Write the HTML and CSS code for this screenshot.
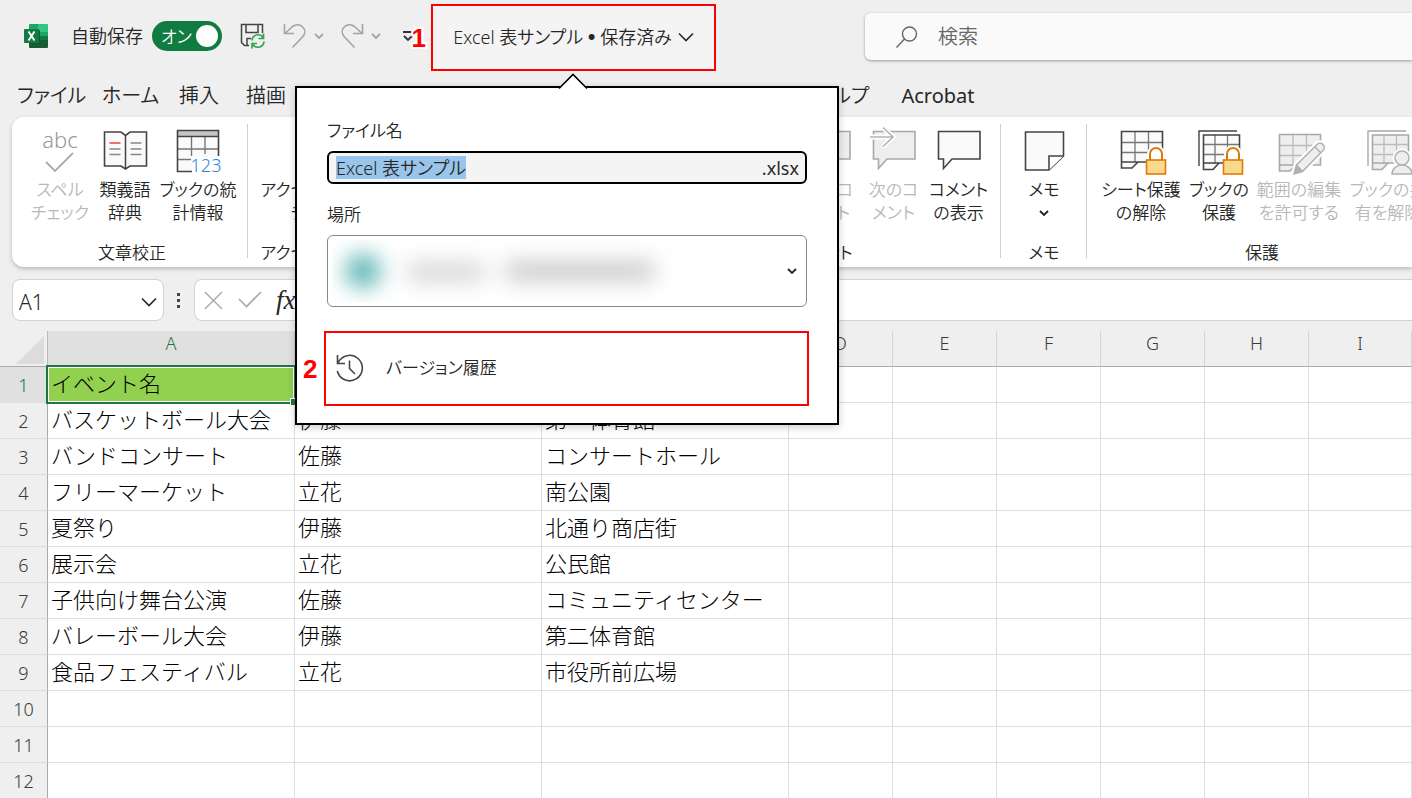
FILE: index.html
```html
<!DOCTYPE html>
<html lang="ja">
<head>
<meta charset="utf-8">
<title>Excel 表サンプル</title>
<link rel="stylesheet" href="styles.css">
</head>
<body>
<svg class="defs" aria-hidden="true">
  <symbol id="chev" viewBox="0 0 16 16"><path d="M1 4.500 L8 11.500 L15 4.500" fill="none" stroke="currentColor" stroke-width="1.600"/></symbol>
  <symbol id="chev-small" viewBox="0 0 10 10"><path d="M1 3 L5 7 L9 3" fill="none" stroke="currentColor" stroke-width="1.800"/></symbol>
  <symbol id="lock" viewBox="0 0 22 30"><path d="M5 15 V8 a6 6 0 0 1 12 0 V15" fill="#fff" stroke="#fff" stroke-width="6"/><path d="M5 15 V8 a6 6 0 0 1 12 0 V15" fill="#fff" stroke="#e07808" stroke-width="2"/><rect x="1.500" y="14" width="19" height="14" fill="#f9d98b" stroke="#e07808" stroke-width="1.600"/></symbol>
  <symbol id="comment" viewBox="0 0 48 48"><path d="M3.500 5.500 H45 V33 H17 L8.500 42.500 V33 H3.500Z" fill="var(--fill)" stroke="currentColor" stroke-width="1.600"/></symbol>
  <symbol id="grid" viewBox="0 0 48 48"><path d="M4.500 5.500 H45.500 V36 H21 L15 42 H4.500Z" fill="var(--fill)"/><path d="M18 6 V36 M31.500 6 V36 M5 16.500 H45 M5 26.500 H45" stroke="var(--inner)" stroke-width="1.300" fill="none"/><path d="M4.500 5.500 H45.500 V36 H21 L15 42 H4.500Z M5 36 H21" fill="none" stroke="currentColor" stroke-width="1.600"/></symbol>
  <symbol id="books" viewBox="0 0 48 48"><path d="M4 40 V5 H42" fill="none" stroke="currentColor" stroke-width="1.400"/><path d="M8.500 9 H44.500 V37 H24 L18 43.500 H8.500Z" fill="var(--fill)"/><path d="M20 9 V38 M32.500 9 V37 M9 18.500 H44 M9 28.500 H44" stroke="var(--inner)" stroke-width="1.300" fill="none"/><path d="M8.500 9 H44.500 V37 H24 L18 43.500 H8.500Z M9 37 H24" fill="none" stroke="currentColor" stroke-width="1.600"/></symbol>
</svg>

<div class="app">
  <header class="titlebar">
    <div class="quick">
      <svg class="logo" viewBox="0 0 24 24" aria-label="Excel">
        <path d="M5 1 a1 1 0 0 1 1-1 H14 V8 H5Z" fill="#21a366"/><path d="M14 0 H23 a1 1 0 0 1 1 1 V8 H14Z" fill="#33c481"/>
        <path d="M5 8 H14 V16 H5Z" fill="#107c41"/><path d="M14 8 H24 V12 H14Z" fill="#21a366"/><path d="M14 12 H24 V16 H14Z" fill="#107c41"/><path d="M5 16 H24 V23 a1 1 0 0 1-1 1 H6 a1 1 0 0 1-1-1Z" fill="#185c37"/>
        <path d="M5 6 H15 a1 1 0 0 1 1 1 V19 a1 1 0 0 1-1 1 H5Z" fill="#0b5a30"/>
        <rect y="5" width="15" height="14" rx="1" fill="#107c41"/><path d="M4.500 7.500 L10.500 16.500 M10.500 7.500 L4.500 16.500" stroke="#fff" stroke-width="2"/>
      </svg>
      <label class="autosave" for="autosave">自動保存</label>
      <span class="switch"><input type="checkbox" role="switch" id="autosave" checked><span>オン</span></span>
      <button class="icon-btn save" aria-label="保存">
        <svg viewBox="0 0 26 26"><path d="M9 22.500 H4.500 L1.500 19.500 V1.500 H22.500 V10" fill="none" stroke="#444" stroke-width="1.500"/><path d="M6 2 V9.500 H18 V2 M7 22 V15.500 H11" fill="none" stroke="#444" stroke-width="1.500"/><path d="M12 17.500 a6 6 0 0 1 11-3 M23.500 10.500 V15.500 H18.500 M24 18.500 a6 6 0 0 1-11 3 M12 25.500 V20.500 H17" fill="none" stroke="#33a352" stroke-width="1.700"/></svg>
      </button>
      <button class="icon-btn undo" aria-label="元に戻す"><svg class="arrow" viewBox="0 0 24 26"><path d="M1.500 1 V10.500 H11 M2 10.500 L9.500 3.500 C17-2 26 7 19.500 14 L9.500 24.500" fill="none" stroke="currentColor" stroke-width="1.600"/></svg><svg class="mini"><use href="#chev-small"/></svg></button>
      <button class="icon-btn redo" aria-label="やり直し"><svg class="arrow" viewBox="0 0 24 26"><path d="M22.500 1 V10.500 H13 M22 10.500 L14.500 3.500 C7-2 -2 7 4.500 14 L14.500 24.500" fill="none" stroke="currentColor" stroke-width="1.600"/></svg><svg class="mini"><use href="#chev-small"/></svg></button>
      <button class="icon-btn custom" aria-label="クイック アクセス ツール バーのユーザー設定"><svg viewBox="0 0 10 12"><path d="M0 2 H10 M1 6 L5 10 L9 6" fill="none" stroke="#333" stroke-width="1.800"/></svg></button>
      <b class="step step-1">1</b>
    </div>
    <button class="doc-title"><span>Excel 表サンプル <i class="bullet">•</i> 保存済み</span><svg><use href="#chev"/></svg></button>
    <label class="search"><svg viewBox="0 0 22 22"><circle cx="13.500" cy="8" r="7" fill="none" stroke="currentColor" stroke-width="1.400"/><path d="M8.500 13 L0.500 21.500" stroke="currentColor" stroke-width="1.400"/></svg><input type="search" placeholder="検索" aria-label="検索"></label>
  </header>

  <nav class="tabs">
    <div class="tabs-left"><a href="#">ファイル</a><a href="#">ホーム</a><a href="#">挿入</a><a href="#">描画</a></div>
    <a href="#">ヘルプ</a><a href="#" class="latin">Acrobat</a>
  </nav>

  <section class="ribbon">
    <div class="group proof">
      <div class="cmds">
        <button class="cmd w60" disabled><svg viewBox="0 0 48 48"><text class="abc" x="24" y="22" text-anchor="middle">abc</text><path d="M10 36 L19 45 L37 27" fill="none" stroke="#aaa" stroke-width="1.800"/></svg><span>スペル<br>チェック</span></button>
        <button class="cmd w70"><svg viewBox="0 0 48 48"><path d="M3.500 6 H20 L24.500 9.500 L29 6 H45.500 V40 H29 L24.500 43 L20 40 H3.500Z" fill="#fafafa" stroke="#444" stroke-width="1.600"/><path d="M24.500 9.500 V43" stroke="#444" stroke-width="1.500"/><path d="M8.500 23 H19.500 M8.500 28.500 H19.500 M29.500 17 H40.500 M29.500 23 H40.500 M29.500 28.500 H40.500" stroke="#888" stroke-width="1.500"/><path d="M8.500 17 H19.500" stroke="#f0403c" stroke-width="1.600"/></svg><span>類義語<br>辞典</span></button>
        <button class="cmd w76"><svg viewBox="0 0 48 48"><path d="M3.500 4.500 H44.500 V46 H3.500Z" fill="#fafafa"/><path d="M3.500 4.500 H44.500 V10.500 H3.500Z" fill="#c4c4c4"/><path d="M17.500 11 V30 M31 11 V28 M4 23 H44 M4 33.500 H17" stroke="#777" stroke-width="1.400" fill="none"/><path d="M20 45.500 H3.500 V4.500 H44.500 V30 M3.500 10.500 H44.500" fill="none" stroke="#444" stroke-width="1.600"/><path d="M18 31 H48 V48 H18Z" fill="#fff"/><text class="n123" x="32" y="46" text-anchor="middle">123</text></svg><span>ブックの統<br>計情報</span></button>
      </div>
      <div class="caption">文章校正</div>
    </div>
    <div class="group access">
      <div class="cmds"><button class="cmd w144"><svg viewBox="0 0 48 48"></svg><span>アクセシビリティ<br>チェック</span></button></div>
      <div class="caption">アクセシビリティ</div>
    </div>
    <div class="group comments">
      <div class="cmds">
        <button class="cmd w65" disabled><svg><use href="#comment"/></svg><span>前のコ<br>メント</span></button>
        <button class="cmd w65" disabled><svg viewBox="0 0 48 48"><use href="#comment"/><path d="M0 11 H23 M13 1.500 L23 11 L13 20.500" fill="none" stroke="#fff" stroke-width="5"/><path d="M0 11 H23 M13 1.500 L23 11 L13 20.500" fill="none" stroke="#b4b4b4" stroke-width="1.600"/></svg><span>次のコ<br>メント</span></button>
        <button class="cmd w65"><svg><use href="#comment"/></svg><span>コメント<br>の表示</span></button>
      </div>
      <div class="caption">コメント</div>
    </div>
    <div class="group memo">
      <div class="cmds"><button class="cmd w65"><svg viewBox="0 0 48 48"><path d="M5.500 6 H43.500 V30 L29 44 H5.500Z" fill="#fafafa" stroke="#444" stroke-width="1.600"/><path d="M29 44 V30 H43.500" fill="#fff" stroke="#444" stroke-width="1.600"/></svg><span>メモ</span><svg class="drop"><use href="#chev-small"/></svg></button></div>
      <div class="caption">メモ</div>
    </div>
    <div class="group protect">
      <div class="cmds">
        <button class="cmd w82"><svg viewBox="0 0 48 48"><use href="#grid"/><use href="#lock" x="28" y="20" width="22" height="30"/></svg><span>シート保護<br>の解除</span></button>
        <button class="cmd w74"><svg viewBox="0 0 48 48"><use href="#books"/><use href="#lock" x="27" y="20" width="22" height="30"/></svg><span>ブックの<br>保護</span></button>
        <button class="cmd w86" disabled><svg viewBox="0 0 48 48"><use href="#grid" y="3"/><path d="M19 48 L21.500 39 L42 18.500 a4 4 0 0 1 6 6 L27.500 45.500Z" fill="#eee" stroke="#fff" stroke-width="6"/><path d="M19 48 L21.500 39 L42 18.500 a4 4 0 0 1 6 6 L27.500 45.500Z M40 21 L46 27 M21.500 39 L27.500 45.500" fill="#eee" stroke="#b0b0b0" stroke-width="1.500"/><path d="M19 48 L21.500 39 L27.500 45.500Z" fill="#b0b0b0"/></svg><span>範囲の編集<br>を許可する</span></button>
        <button class="cmd w92" disabled><svg viewBox="0 0 48 48"><use href="#books"/><g stroke="#fff" stroke-width="6"><circle cx="38" cy="32" r="6.500"/><path d="M28 48 a10 9 0 0 1 20 0Z"/></g><g fill="#eee" stroke="#b0b0b0" stroke-width="1.500"><path d="M28 48 a10 9 0 0 1 20 0Z"/><circle cx="38" cy="32" r="7"/></g></svg><span>ブックの共<br>有を解除</span></button>
      </div>
      <div class="caption">保護</div>
    </div>
  </section>

  <div class="formula">
    <div class="namebox"><input value="A1" aria-label="名前ボックス"><svg><use href="#chev"/></svg></div>
    <span class="dots"><i></i><i></i><i></i></span>
    <div class="fx">
      <svg viewBox="0 0 20 20"><path d="M1 1 L19 19 M19 1 L1 19" stroke="#aaa" stroke-width="1.500"/></svg>
      <svg class="tick" viewBox="0 0 24 20"><path d="M1 9 L8.500 16.500 L23 2" fill="none" stroke="#aaa" stroke-width="1.600"/></svg>
      <em>fx</em>
      <input aria-label="数式バー">
    </div>
  </div>

  <main class="sheet">
    <table>
      <colgroup><col class="c-num"><col class="c-wide"><col class="c-wide"><col class="c-wide"><col class="c-std"><col class="c-std"><col class="c-std"><col class="c-std"><col class="c-std"><col></colgroup>
      <thead><tr><th class="corner"><svg viewBox="0 0 28 28"><path d="M28 0 V28 H0Z" fill="#dcdcdc"/></svg></th><th class="on">A</th><th>B</th><th>C</th><th>D</th><th>E</th><th>F</th><th>G</th><th>H</th><th>I</th></tr></thead>
      <tbody>
        <tr><th class="on">1</th><td class="active">イベント名</td><td></td><td></td><td></td><td></td><td></td><td></td><td></td><td></td></tr>
        <tr><th>2</th><td>バスケットボール大会</td><td>伊藤</td><td>第一体育館</td><td></td><td></td><td></td><td></td><td></td><td></td></tr>
        <tr><th>3</th><td>バンドコンサート</td><td>佐藤</td><td>コンサートホール</td><td></td><td></td><td></td><td></td><td></td><td></td></tr>
        <tr><th>4</th><td>フリーマーケット</td><td>立花</td><td>南公園</td><td></td><td></td><td></td><td></td><td></td><td></td></tr>
        <tr><th>5</th><td>夏祭り</td><td>伊藤</td><td>北通り商店街</td><td></td><td></td><td></td><td></td><td></td><td></td></tr>
        <tr><th>6</th><td>展示会</td><td>立花</td><td>公民館</td><td></td><td></td><td></td><td></td><td></td><td></td></tr>
        <tr><th>7</th><td>子供向け舞台公演</td><td>佐藤</td><td>コミュニティセンター</td><td></td><td></td><td></td><td></td><td></td><td></td></tr>
        <tr><th>8</th><td>バレーボール大会</td><td>伊藤</td><td>第二体育館</td><td></td><td></td><td></td><td></td><td></td><td></td></tr>
        <tr><th>9</th><td>食品フェスティバル</td><td>立花</td><td>市役所前広場</td><td></td><td></td><td></td><td></td><td></td><td></td></tr>
        <tr><th>10</th><td></td><td></td><td></td><td></td><td></td><td></td><td></td><td></td><td></td></tr>
        <tr><th>11</th><td></td><td></td><td></td><td></td><td></td><td></td><td></td><td></td><td></td></tr>
        <tr><th>12</th><td></td><td></td><td></td><td></td><td></td><td></td><td></td><td></td><td></td></tr>
      </tbody>
    </table>
  </main>

  <div class="flyout" role="dialog" aria-label="ファイル情報">
    <svg class="beak" viewBox="0 0 30 17"><path d="M0 17 L1.500 15 L15 1.500 L28.500 15 L30 17Z" fill="#fff"/><path d="M1 15.500 L15 1.500 L29 15.500" fill="none" stroke="#000" stroke-width="1.600"/></svg>
    <label for="fname">ファイル名</label>
    <div class="name-field"><input id="fname" value="Excel 表サンプル"><span class="latin">.xlsx</span></div>
    <label for="place">場所</label>
    <div class="place-field">
      <select id="place"><option></option></select>
      <div class="haze" aria-hidden="true"><i class="avatar"></i><i class="line-a"></i><i class="line-b"></i></div>
      <svg><use href="#chev-small"/></svg>
    </div>
    <div class="history-row">
      <b class="step">2</b>
      <button class="history"><svg viewBox="0 0 28 28"><path d="M1.500 1 V9.500 H9 M2 9 A12.700 12.700 0 1 1 1.300 17 M13.500 6.500 V14.500 L19 20" fill="none" stroke="#444" stroke-width="1.600"/></svg><span>バージョン履歴</span></button>
    </div>
  </div>
</div>
</body>
</html>
```

FILE: styles.css
```css
* { box-sizing: border-box; }
body {
  margin: 0;
  overflow: hidden;
  background: #efefef;
  color: #262626;
  font: 350 18px/24px "Noto Sans", "Noto Sans CJK JP", sans-serif;
  font-feature-settings: "palt";
}
button, input, select { font: inherit; color: inherit; font-feature-settings: inherit; background: none; border: 0; padding: 0; margin: 0; outline: 0; }
button { cursor: pointer; }
a { color: inherit; text-decoration: none; }
svg { display: block; flex: none; overflow: visible; }
.defs { position: absolute; width: 0; height: 0; }
.latin { font-weight: 400; }
.app { position: relative; min-height: 100vh; }

.titlebar { display: flex; height: 72px; }
.quick { position: relative; display: flex; align-items: center; flex: none; width: 431px; padding-left: 24px; }
.logo { width: 24px; height: 24px; }
.autosave { margin-left: 23px; width: 73px; white-space: nowrap; }
.switch { position: relative; width: 70px; height: 30px; margin-left: 8px; color: #fff; }
.switch input { display: block; appearance: none; width: 70px; height: 30px; border-radius: 15px; background: #107c41; }
.switch input::before { content: ""; display: block; width: 22px; height: 22px; margin: 4px 4px 4px 44px; border-radius: 11px; background: #fff; }
.switch span { position: absolute; left: 9px; top: 4px; font-size: 17px; pointer-events: none; }
.icon-btn { display: flex; align-items: center; color: #a4a4a4; }
.save { margin-left: 18px; }
.save svg { width: 26px; height: 26px; }
.undo { margin-left: 17px; }
.redo { margin-left: 16px; }
.arrow { width: 24px; height: 26px; }
.mini { width: 10px; height: 10px; margin-left: 7px; }
.custom { margin-left: 22px; }
.custom svg { width: 10px; height: 12px; }
.step { font: bold 26px/30px "Liberation Sans", Arial, sans-serif; color: #f00; }
.step-1 { position: absolute; right: 5px; top: 23px; text-shadow: 2px 0 #fff, -2px 0 #fff, 0 2px #fff, 0 -2px #fff, 2px 2px #fff, -2px -2px #fff, 2px -2px #fff, -2px 2px #fff; }
.doc-title { display: flex; align-items: center; justify-content: center; gap: 6px; flex: none; width: 285px; height: 67px; margin-top: 4px; padding-bottom: 2px; border: 2px solid #f00; background: #f4f4f4; white-space: nowrap; }
.doc-title svg { width: 16px; height: 16px; }
.bullet { font: normal 22px/20px "Liberation Sans", sans-serif; }
.search { display: flex; align-items: center; flex: 1; height: 47px; margin: 13px 0 0 149px; padding-left: 31px; border-radius: 6px 0 0 6px; background: #fafafa; box-shadow: 0 1px 3px #999; color: #666; font-size: 20px; }
.search svg { width: 22px; height: 22px; }
.search input { flex: 1; min-width: 0; margin-left: 20px; }
.search input::placeholder { color: #666; }

.tabs { display: flex; height: 45px; align-items: center; padding: 2px 0 0 17px; font-size: 20px; white-space: nowrap; gap: 32px; }
.tabs-left { display: grid; grid-template-columns: 85px 77px 67px auto; width: 763px; }

.ribbon { display: flex; height: 150px; margin-left: 12px; padding-top: 7px; background: #fff; border-radius: 12px 0 0 12px; box-shadow: 0 2px 4px #bbb; overflow: hidden; }
.group { display: flex; flex-direction: column; flex: none; background: linear-gradient(#d0d0d0, #d0d0d0) right top / 1px 134px no-repeat; }
.cmds { display: flex; height: 116px; }
.caption { text-align: center; line-height: 26px; font-size: 17px; }
.proof { width: 236px; }
.proof .caption { padding-left: 4px; }
.proof .cmds { padding-left: 18px; }
.access { width: 144px; background: none; }
.comments { width: 356px; margin-left: 253px; }
.comments .cmds { justify-content: flex-end; padding-right: 10px; }
.memo { width: 86px; }
.memo .cmds { justify-content: center; }
.protect { width: 350px; background: none; }
.protect .cmds { padding-left: 13px; }
.cmd { display: flex; flex-direction: column; align-items: center; flex: none; padding-top: 2px; font-size: 17px; line-height: 23px; white-space: nowrap; color: #444; --fill: #fafafa; --inner: #777; }
.cmd > svg { width: 48px; height: 48px; margin-bottom: 4px; }
.cmd span { color: #262626; }
.cmd:disabled { color: #a8a8a8; --fill: #eee; --inner: #bbb; }
.cmd:disabled span { color: #b8b8b8; }
.cmd .drop { width: 10px; height: 10px; margin-top: 7px; color: #222; }
.abc { font-size: 22px; fill: #999; }
.n123 { font-size: 18px; fill: #2b88d8; }
.w60 { width: 60px; } .w65 { width: 65px; } .w70 { width: 70px; } .w74 { width: 74px; } .w76 { width: 76px; }
.w82 { width: 82px; } .w86 { width: 86px; } .w92 { width: 92px; } .w144 { width: 144px; }

.formula { display: flex; align-items: center; margin-top: 12px; padding-left: 12px; height: 42px; }
.namebox, .fx { display: flex; align-items: center; height: 42px; border: 1px solid #d2d2d2; background: #fff; }
.namebox { width: 152px; border-radius: 8px; padding: 4px 6px 0; font-size: 21px; }
.namebox input { flex: 1; min-width: 0; }
.namebox svg { width: 16px; height: 16px; }
.dots { display: flex; flex-direction: column; gap: 3px; margin: 0 14px 0 13px; }
.dots i { width: 3px; height: 3px; background: #444; }
.fx { flex: 1; border-right: 0; border-radius: 8px 0 0 8px; padding-left: 9px; }
.fx svg { width: 19px; height: 19px; }
.fx .tick { width: 24px; height: 20px; margin-left: 15px; }
.fx em { margin-left: 14px; font: italic normal 27px/30px "Liberation Serif", serif; }
.fx input { flex: 1; min-width: 0; margin-left: 12px; }

.sheet { margin-top: 10px; font-feature-settings: normal; }
table { width: 100%; table-layout: fixed; border-collapse: separate; border-spacing: 0; background: #fff; }
.c-num { width: 48px; }
.c-wide { width: 247px; }
.c-std { width: 104px; }
th { font-weight: 350; color: #3a3a3a; background: #efefef; padding: 0; }
thead th { height: 36px; line-height: 24px; padding-bottom: 11px; border-bottom: 1px solid #aaa; border-right: 1px solid #d4d4d4; }
thead .on { background: #e0e0e0; }
.on { color: #1a7346; }
thead .corner { padding: 0; border-right-color: #bbb; }
.corner svg { width: 28px; height: 28px; margin: 2px 0 0 16px; }
tbody th { height: 36px; border-right: 1px solid #aaa; border-bottom: 1px solid #dcdcdc; line-height: 24px; padding-top: 1px; }
tbody th.on { background: #e0e0e0; }
td { padding: 0 0 5px 3px; height: 36px; border-right: 1px solid #dedede; border-bottom: 1px solid #dedede; color: #000; font: 300 22px/30px "Noto Sans CJK JP", sans-serif; white-space: nowrap; }
.active { position: relative; background: #92d050; }
.active::before { content: ""; position: absolute; inset: -2px; border: 2px solid #217346; outline: 1px solid #fff; outline-offset: -3px; }
.active::after { content: ""; position: absolute; right: -3px; bottom: -3px; width: 6px; height: 6px; background: #217346; border: 1px solid #fff; border-width: 1px 0 0 1px; }

.flyout { position: absolute; left: 295px; top: 86px; width: 544px; padding: 31px 28px 17px 30px; border: 2px solid #000; background: #fff; box-shadow: 0 2px 8px #0003; font-size: 17px; }
.beak { position: absolute; left: 261px; top: -15px; width: 30px; height: 17px; }
.flyout > label { display: block; }
.name-field { display: flex; align-items: center; justify-content: space-between; height: 33px; margin: 8px 2px 19px 0; padding: 0 6px 0 7px; border: 2px solid #000; border-radius: 6px; background: #f4f4f4; font-size: 18px; }
.name-field input { field-sizing: content; height: 23px; background: #99c5ea; }
.place-field { display: flex; align-items: center; position: relative; height: 72px; margin: 8px 2px 24px 0; border: 1px solid #888; border-radius: 6px; }
.place-field select { flex: 1; height: 70px; appearance: none; }
.place-field > svg { position: absolute; right: 9px; width: 10px; height: 10px; pointer-events: none; }
.haze { position: absolute; inset: 4px; overflow: hidden; pointer-events: none; }
.haze i { position: absolute; filter: blur(11px); }
.avatar { left: 13px; top: 14px; width: 36px; height: 34px; border-radius: 17px; background: #5fb5b5; }
.line-a { left: 76px; top: 24px; width: 76px; height: 16px; background: #ccc; }
.line-b { left: 174px; top: 22px; width: 148px; height: 18px; background: #c4c4c4; }
.history-row { display: flex; align-items: center; margin-left: -24px; }
.history-row .step { width: 21px; }
.history { display: flex; align-items: center; gap: 22px; flex: 1; height: 75px; padding: 0 0 2px 10px; border: 2px solid #f00; }
.history svg { width: 28px; height: 28px; }
```
